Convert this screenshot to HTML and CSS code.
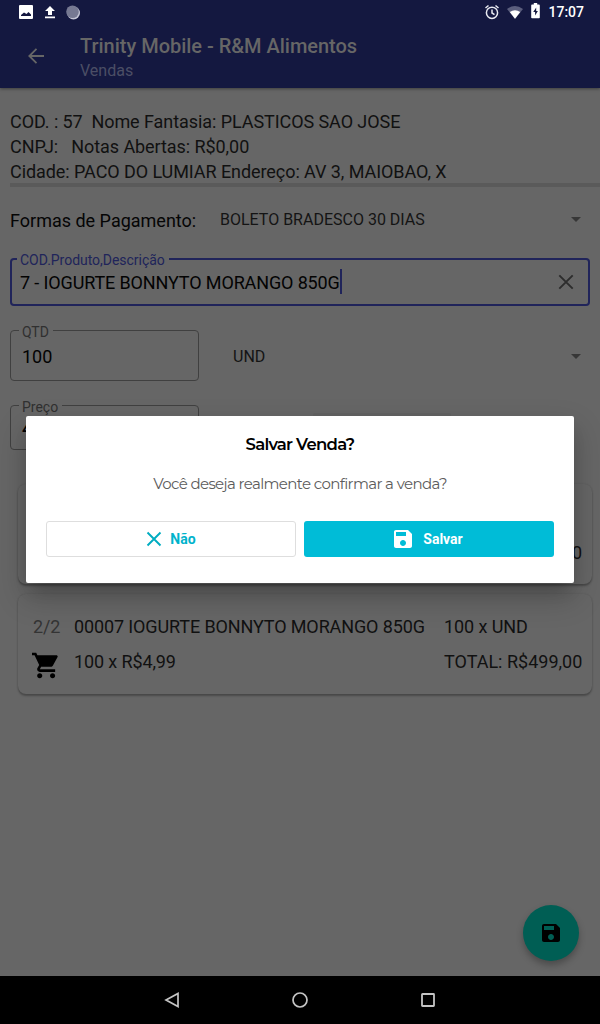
FILE: index.html
```html
<!DOCTYPE html>
<html lang="pt-BR">
<head>
<meta charset="utf-8">
<title>Trinity Mobile - Vendas</title>
<link rel="stylesheet" href="styles.css">
</head>
<body>
<div class="screen">
  <header class="top">
    <div class="statusbar">
      <div class="status-left">
        <svg width="14" height="14" viewBox="0 0 14 14"><path fill="#fff" fill-rule="evenodd" d="M1 0h12a1 1 0 0 1 1 1v12a1 1 0 0 1-1 1H1a1 1 0 0 1-1-1V1a1 1 0 0 1 1-1zM2 11h10V9.500L9.500 7 7.500 9 5 7.500 2 10z"/></svg>
        <svg width="12" height="13" viewBox="0 0 12 13"><path fill="#fff" d="M6 0l5 5H8v4H4V5H1zM1 10.500h10v1.800H1z"/></svg>
        <svg width="15" height="15" viewBox="0 0 15 15"><circle cx="7.500" cy="8" r="6.500" fill="#c3c4d4"/><circle cx="6.500" cy="6.800" r="6.300" fill="#767992"/></svg>
      </div>
      <div class="status-right">
        <svg class="alarm" width="16" height="16" viewBox="0 0 16 16" fill="none" stroke="#e8e9f0" stroke-width="1.500"><circle cx="8" cy="8.800" r="5.600"/><path d="M8 5.500V9l2.500 1.600M1.500 4l3-2.500M14.500 4l-3-2.500"/></svg>
        <svg class="wifi" width="16" height="13" viewBox="0 0 16 13"><path fill="#5b5e7d" d="M0 3Q8-3 16 3L8 13z"/><path fill="#fff" d="M2.800 6Q8 2.500 13.200 6L8 12.800z"/></svg>
        <svg class="battery" width="9" height="16" viewBox="0 0 9 16"><path fill="#fff" d="M2.800 0h3.400v1.600H8c.5 0 .8.300.8.800v12c0 .5-.3.800-.8.800H1c-.5 0-.8-.3-.8-.8v-12c0-.5.3-.8.800-.8h1.800z"/><path fill="#141840" d="M5.200 4.500L2.200 9h1.900v3.600l2.800-4.500H5.200z"/></svg>
        <span class="clock">17:07</span>
      </div>
    </div>
    <div class="appbar">
      <svg class="back" width="16" height="16" viewBox="0 0 16 16" fill="none" stroke="#666" stroke-width="1.800"><path d="M16 8H1.500M8.500 .800L1.300 8l7.200 7.200"/></svg>
      <div class="titles">
        <div class="title">Trinity Mobile - R&amp;M Alimentos</div>
        <div class="subtitle">Vendas</div>
      </div>
    </div>
  </header>

  <main class="content">
    <section class="client">
      <div>COD. : 57&nbsp; Nome Fantasia: PLASTICOS SAO JOSE</div>
      <div>CNPJ: &nbsp; Notas Abertas: R$0,00</div>
      <div>Cidade: PACO DO LUMIAR Endereço: AV 3, MAIOBAO, X</div>
    </section>
    <div class="rule"></div>

    <section class="payment">
      <span class="payment-label">Formas de Pagamento:</span>
      <span class="spinner">BOLETO BRADESCO 30 DIAS</span>
      <i class="caret"></i>
    </section>

    <fieldset class="field product">
      <legend>COD.Produto,Descrição</legend>
      <span class="value">7 - IOGURTE BONNYTO MORANGO 850G</span><i class="cursor"></i>
      <svg class="clear" width="16" height="16" viewBox="0 0 16 16" stroke="#2d2d2d" stroke-width="1.900"><path d="M1.300 1.300l13.400 13.400M14.700 1.300L1.300 14.700"/></svg>
    </fieldset>

    <section class="quantity">
      <fieldset class="field qty"><legend>QTD</legend><span class="value">100</span></fieldset>
      <span class="spinner">UND</span>
      <i class="caret"></i>
    </section>

    <section class="price-row">
      <fieldset class="field price"><legend>Preço</legend><span class="value">4,99</span></fieldset>
      <div class="add"></div>
    </section>

    <section class="items">
      <article class="card">
        <div class="index"></div>
        <div class="name"></div>
        <div class="amount"></div>
        <div class="icon"></div>
        <div class="unit"></div>
        <div class="total first-total">0</div>
      </article>
      <article class="card">
        <div class="index">2/2</div>
        <div class="name">00007 IOGURTE BONNYTO MORANGO 850G</div>
        <div class="amount">100 x UND</div>
        <div class="icon"><svg width="27" height="27" viewBox="1 1.500 21 21"><path d="M7 18c-1.100 0-1.990.9-1.990 2S5.900 22 7 22s2-.9 2-2-.9-2-2-2zM1 2v2h2l3.600 7.590-1.350 2.450c-.16.280-.25.610-.25.960 0 1.100.9 2 2 2h12v-2H7.420c-.14 0-.25-.11-.25-.25l.03-.12.900-1.630h7.450c.75 0 1.410-.41 1.750-1.030l3.580-6.490c.08-.14.120-.31.120-.48 0-.55-.45-1-1-1H5.210l-.94-2H1zm16 16c-1.100 0-1.990.9-1.990 2s.890 2 1.990 2 2-.9 2-2-.9-2-2-2z"/></svg></div>
        <div class="unit">100 x R$4,99</div>
        <div class="total">TOTAL: R$499,00</div>
      </article>
    </section>
  </main>

  <nav class="navbar">
    <svg width="16" height="16" viewBox="0 0 16 16" fill="none" stroke="#c4c4c4" stroke-width="1.700"><path d="M14 1.500v13L2 8z"/></svg>
    <svg width="16" height="16" viewBox="0 0 16 16" fill="none" stroke="#c4c4c4" stroke-width="1.700"><circle cx="8" cy="8" r="7"/></svg>
    <svg width="16" height="16" viewBox="0 0 16 16" fill="none" stroke="#c4c4c4" stroke-width="1.800"><rect x="2" y="2" width="12" height="12" rx=".5"/></svg>
  </nav>

  <button class="fab" aria-label="Salvar"><svg width="24" height="24" viewBox="0 0 24 24"><path d="M17 3H5c-1.110 0-2 .9-2 2v14c0 1.100.890 2 2 2h14c1.100 0 2-.9 2-2V7l-4-4zm-5 16c-1.660 0-3-1.340-3-3s1.340-3 3-3 3 1.340 3 3-1.340 3-3 3zm3-10H5V5h10v4z"/></svg></button>

  <div class="dialog" role="dialog">
    <h1>Salvar Venda?</h1>
    <p>Você deseja realmente confirmar a venda?</p>
    <div class="actions">
      <button class="btn no"><svg width="16" height="16" viewBox="0 0 16 16" stroke="#00acc1" stroke-width="1.900"><path d="M1.500 1.500l13 13M14.500 1.500l-13 13"/></svg><span>Não</span></button>
      <button class="btn yes"><svg width="24" height="24" viewBox="0 0 24 24" fill="#fff"><path d="M17 3H5c-1.110 0-2 .9-2 2v14c0 1.100.890 2 2 2h14c1.100 0 2-.9 2-2V7l-4-4zm-5 16c-1.660 0-3-1.340-3-3s1.340-3 3-3 3 1.340 3 3-1.340 3-3 3zm3-10H5V5h10v4z"/></svg><span>Salvar</span></button>
    </div>
  </div>
</div>
</body>
</html>
```

FILE: styles.css
```css
* { box-sizing: border-box; }
body { margin: 0; font-family: Roboto, "Noto Sans", sans-serif; background: #666; }
svg { display: block; flex: none; }
.screen { position: relative; width: 600px; height: 1024px; display: flex; flex-direction: column; overflow: hidden; background: #666; color: #111; white-space: nowrap; }

.top { height: 88px; background: #141840; box-shadow: 0 1px 3px rgba(0,0,0,.4); }
.statusbar { height: 24px; display: flex; justify-content: space-between; padding: 0 16px 0 19px; }
.status-left { display: flex; align-items: center; gap: 11px; }
.status-left svg:nth-child(3) { margin-left: -1px; }
.status-right { display: flex; align-items: center; }
.wifi { margin-left: 7px; }
.battery { margin: -2px 8px 0 8px; }
.clock { color: #fff; font-size: 14px; font-weight: 500; line-height: 24px; }
.appbar { height: 64px; display: flex; align-items: center; padding-left: 28px; color: #666; }
.titles { margin-left: 36px; padding-top: 4px; }
.title { font-size: 20px; font-weight: 500; line-height: 25px; letter-spacing: -.02px; }
.subtitle { font-size: 16px; line-height: 23px; color: #4b4e65; }

.content { flex: 1; padding: 21px 0 0 10px; }
.client { height: 74px; font-size: 18px; line-height: 25px; letter-spacing: -.07px; }
.rule { height: 4px; background: #5a5a5a; }

.payment { height: 65px; margin-right: 19px; display: flex; align-items: center; }
.payment-label { width: 210px; padding-top: 2px; font-size: 18px; color: #050505; }
.spinner { flex: 1; font-size: 16px; color: #141414; }
.caret { border: 5px solid transparent; border-top-color: #373737; border-bottom: 0; }

.field { margin: 0; padding: 0 10px; border: 1px solid #404040; border-radius: 4px; color: #030303; font-size: 18px; min-width: 0; }
.field legend { height: 12px; margin-left: -2px; padding: 0 4px 0 3px; font-size: 14px; line-height: 16px; color: #303030; }
.product { width: 580px; height: 54px; padding: 0 14px 0 8px; border: 2px solid #20245a; display: flex; }
.product legend { height: 14px; margin-left: -3px; color: #20245a; letter-spacing: -.03px; }
.product .value { line-height: 22px; margin-top: 6px; letter-spacing: -.13px; }
.cursor { width: 2px; height: 25px; margin-top: 3px; background: #20245a; }
.clear { margin: 8px 0 0 auto; }

.quantity { height: 59px; margin-top: 18px; padding-right: 19px; display: flex; }
.qty { width: 189px; height: 57px; }
.qty .value { display: block; line-height: 22px; margin: 10px 0 0 1px; }
.quantity .spinner { margin-left: 34px; line-height: 24px; padding-top: 21px; }
.quantity .caret { margin-top: 30px; height: 5px; }

.price-row { height: 51px; margin-top: 16px; display: flex; }
.price { width: 189px; height: 51px; }
.price .value { display: block; line-height: 22px; margin: 7px 0 0 1px; font-weight: 500; }
.add { width: 138px; height: 36px; margin: 14px 0 0 114px; border-radius: 2px; background: #626262; }

.items { padding: 34px 8px 0 8px; display: flex; flex-direction: column; gap: 10px; }
.card { height: 100px; padding: 21px 10px 0 14px; border-radius: 8px; background: #666; box-shadow: 0 2px 2px rgba(0,0,0,.27), 0 0 2px rgba(0,0,0,.12); font-size: 18px; display: grid; grid-template-columns: 42px 370px 1fr; grid-template-rows: 24px 24px; row-gap: 11px; line-height: 24px; }
.card .index { padding-left: 1px; color: #343434; letter-spacing: -.1px; }
.card .name, .card .unit { letter-spacing: -.12px; }
.card .amount { letter-spacing: -.08px; }
.card .icon { padding-top: 2px; }
.first-total { text-align: right; padding-top: 1px; }

.navbar { height: 48px; background: #000; display: flex; align-items: center; justify-content: center; gap: 112px; }

.fab { position: absolute; left: 523px; top: 905px; width: 56px; height: 56px; padding: 16px; border: 0; border-radius: 50%; background: #005e54; box-shadow: 0 4px 7px rgba(0,0,0,.28); }

.dialog { position: absolute; left: 26px; top: 416px; width: 548px; height: 167px; padding: 16px 20px 0; border-radius: 2px; background: #fff; text-align: center; box-shadow: 0 11px 15px -5px rgba(0,0,0,.15), 0 14px 30px 2px rgba(0,0,0,.2); font-family: Montserrat, Lato, sans-serif; }
.dialog h1 { margin: 0; font-size: 16.5px; line-height: 24px; font-weight: 600; letter-spacing: -.75px; color: #000; }
.dialog p { margin: 16px 0 0; font-size: 15px; line-height: 24px; letter-spacing: -.62px; color: #5c5c5c; }
.actions { margin-top: 25px; display: grid; grid-template-columns: 250px 250px; gap: 8px; }
.btn { height: 36px; padding: 0; display: flex; align-items: center; justify-content: center; border-radius: 3px; font: 700 14px Roboto, sans-serif; }
.no { gap: 8px; background: #fff; border: 1px solid #dedede; color: #00b3cc; }
.yes { gap: 8px; padding-right: 4px; background: #00bcd7; border: 0; color: #fff; }
```
